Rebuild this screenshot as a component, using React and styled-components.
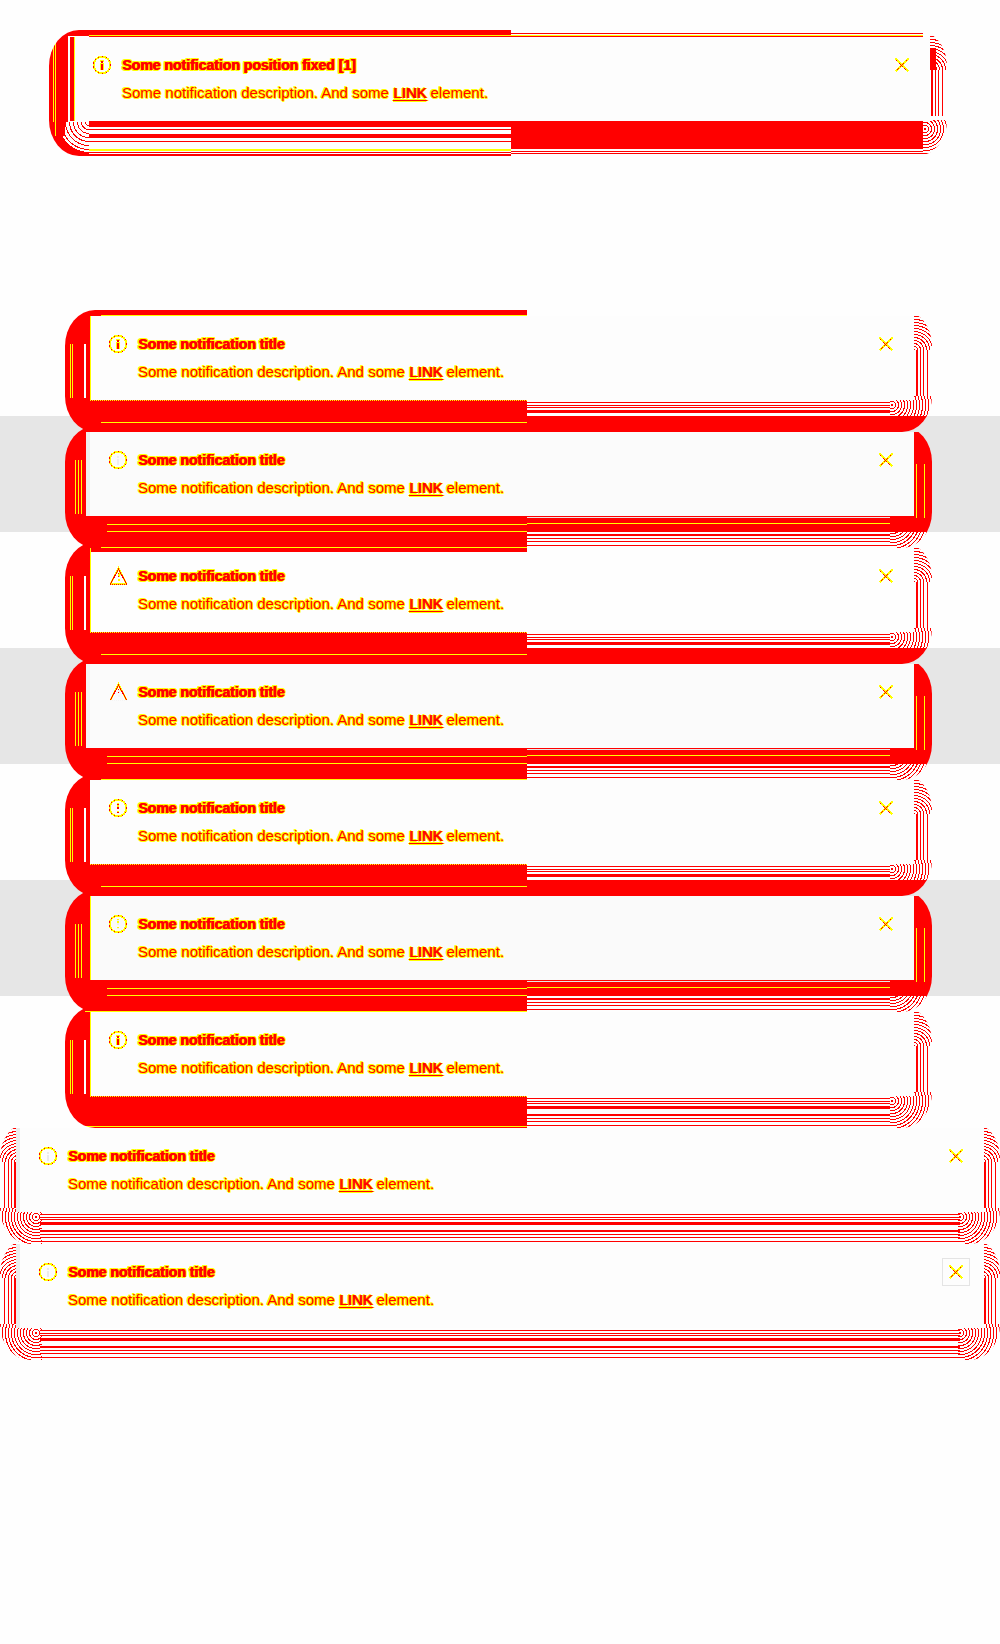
import React from 'react';
import styled, { createGlobalStyle, css } from 'styled-components';

const RED = '#ff0000';
const YELLOW = '#ffff00';

const GlobalStyle = createGlobalStyle`
  *, *::before, *::after { box-sizing: border-box; }
  body {
    margin: 0;
    background: #fefefe;
    font-family: "Liberation Sans", Arial, sans-serif;
  }
`;

/* Builds a hard-edged gradient: [[from, to, colour], ...], transparent between. */
const bands = (direction, list, fill = 'transparent') => {
  const stops = [];
  let last = 0;
  list.forEach(([from, to, colour]) => {
    stops.push(`${fill} ${last}px ${from}px`, `${colour} ${from}px ${to}px`);
    last = to;
  });
  stops.push(`${fill} ${last}px`);
  return `linear-gradient(${direction}, ${stops.join(', ')})`;
};

const red = (from, to) => [from, to, RED];
const yellow = (from, to) => [from, to, YELLOW];

const sideStripes = [red(4, 5), red(8, 9), red(11, 12), red(14, 16)];
const bottomStripes = [red(92, 93), red(95, 96), red(97, 98), red(100, 103), red(108, 110), red(112, 113), red(115, 116), red(119, 120)];

const sideLayers = (side) => `
  ${bands(side === 'right' ? 'to left' : 'to right', sideStripes)} ${side} 0 top 40px / 18px 46px no-repeat`;

const rings = 'repeating-radial-gradient(circle at 2px 9px, #ff0000 0 1px, transparent 1px 3px)';
const ringsFlipped = 'repeating-radial-gradient(circle at 36px 9px, #ff0000 0 1px, transparent 1px 3px)';
const topRings = 'repeating-radial-gradient(circle at 0 36px, #ff0000 0 1px, transparent 1px 3px)';
const topRingsFlipped = 'repeating-radial-gradient(circle at 18px 36px, #ff0000 0 1px, transparent 1px 3px)';

const rightCorners = `
  ${topRings} right 0 top 4px / 18px 36px no-repeat,
  ${rings} right 0 top 86px / 42px 36px no-repeat`;

const leftCorners = `
  ${topRingsFlipped} left 0 top 4px / 18px 36px no-repeat,
  ${ringsFlipped} left 0 top 86px / 42px 36px no-repeat`;

const stripedBottom = `${bands('to bottom', bottomStripes)} left 462px top 0 / calc(100% - 504px) 122px no-repeat`;

const halos = {
  fixed: css`
    inset: -7px -17px -35px -21px;
    background:
      ${bands('to bottom', [yellow(5, 6), red(6, 7), yellow(90, 91), red(91, 97), red(99, 100), red(104, 108), red(111, 112), yellow(119, 121), red(122, 123), red(124, 126)])} 40px 0 / 422px 100% no-repeat,
      linear-gradient(${RED}, ${RED}) 0 0 / 462px 6px no-repeat,
      ${bands('to right', [red(0, 4), yellow(4, 5), red(5, 6), yellow(6, 7), red(7, 19)])} 0 0 / 40px 92px no-repeat,
      ${bands('to right', [red(0, 4), yellow(6, 7), red(8, 16)])} 0 92px / 22px 14px no-repeat,
      repeating-radial-gradient(circle at 40px 0, transparent 0 3px, ${RED} 3px 4px) 0 92px / 40px 34px no-repeat,
      radial-gradient(circle at 40px 0, transparent 30px, ${RED} 30px) 0 92px / 40px 34px no-repeat,
      ${bands('to bottom', [red(3, 4), yellow(5, 6), red(6, 7), yellow(90, 91), red(91, 119), red(121, 122), red(123, 124)])} 462px 0 / calc(100% - 486px) 100% no-repeat,
      ${bands('to left', sideStripes)} right 0 top 40px / 17px 46px no-repeat,
      ${topRings} right 0 top 4px / 17px 36px no-repeat,
      linear-gradient(${RED}, ${RED}) right 11px top 18px / 6px 22px no-repeat,
      ${rings} right 0 top 90px / 24px 34px no-repeat;
  `,
  light: css`
    inset: -6px -18px -32px -21px;
    background:
      ${bands('to bottom', [yellow(5, 6), yellow(112, 113)])} 36px 0 / 426px 100% no-repeat,
      ${bands('to right', [yellow(5, 6), yellow(7, 8), [19, 21, '#ffffff']])} 0 34px / 24px 54px no-repeat,
      linear-gradient(${RED}, ${RED}) 0 0 / 462px 100% no-repeat,
      linear-gradient(${RED}, ${RED}) 0 106px / 100% 16px no-repeat,
      ${stripedBottom},
      ${sideLayers('right')},
      ${rightCorners};
  `,
  shaded: css`
    inset: -6px -18px -32px -21px;
    background:
      ${bands('to bottom', [yellow(98, 99), yellow(105, 106)])} 42px 0 / 420px 122px no-repeat,
      ${bands('to right', [yellow(10, 11), yellow(13, 14), yellow(16, 17)])} 0 34px / 24px 54px no-repeat,
      linear-gradient(${RED}, ${RED}) 0 0 / 462px 100% no-repeat,
      ${bands('to bottom', [[91, 92, '#e6e6e6'], yellow(97, 98)])} 462px 0 / calc(100% - 504px) 106px no-repeat,
      ${bands('to left', [yellow(7, 8), yellow(15, 16)])} right 0 top 38px / 18px 54px no-repeat,
      linear-gradient(${RED}, ${RED}) 0 6px / 100% 100px no-repeat,
      ${stripedBottom},
      ${rightCorners};
  `,
  last: css`
    inset: -6px -18px -32px -21px;
    background:
      ${bands('to bottom', [yellow(5, 6), yellow(120, 121)])} 20px 0 / 442px 100% no-repeat,
      ${bands('to right', [yellow(5, 6), yellow(7, 8), [19, 21, '#ffffff']])} 0 34px / 24px 54px no-repeat,
      linear-gradient(${RED}, ${RED}) 0 0 / 462px 100% no-repeat,
      ${stripedBottom},
      ${sideLayers('right')},
      ${rightCorners};
  `,
  wide: css`
    inset: -6px -16px -32px -16px;
    background:
      ${bands('to bottom', bottomStripes)} 40px 0 / calc(100% - 80px) 122px no-repeat,
      ${sideLayers('right')},
      ${sideLayers('left')},
      ${rightCorners},
      ${leftCorners};
  `,
};

const Page = styled.div`
  padding: 37px 0 300px;
  overflow: hidden;
`;

const Fixed = styled.header`
  max-width: 860px;
  margin: 0 auto 179px;
`;

const Band = styled.section`
  padding: 16px;
  background: ${(p) => (p.$shaded ? '#e6e6e6' : 'transparent')};
`;

const Notice = styled.article`
  position: relative;

  &::before {
    content: "";
    position: absolute;
    border-radius: 30px / 36px;
    ${(p) => halos[p.$halo]}
  }
`;

const Narrow = styled.div`
  max-width: 828px;
  margin: 0 auto;
`;

const Surface = styled.div`
  position: relative;
  z-index: 1;
  display: flex;
  gap: 8px;
  padding: 16px 14px 16px 16px;
  border-left: 4px solid ${(p) => p.$accent};
  background: ${(p) => (p.$topEdge ? `linear-gradient(${RED}, ${RED}) 0 0 / 437px 4px no-repeat` : 'none')} ${(p) => p.$fill};
  ${(p) => p.$edge && `box-shadow: inset 1px 0 ${YELLOW};`}
  ${(p) => p.$dotted && css`
    &::after {
      content: "";
      position: absolute;
      left: 0;
      top: 100%;
      width: 437px;
      height: 1px;
      background: repeating-linear-gradient(to right, ${YELLOW} 0 1px, ${RED} 1px 2px);
    }
  `}
`;

const Icon = styled.svg`
  flex: none;
  width: 24px;
  height: 24px;
`;

const Copy = styled.div`
  flex: 1;
  min-width: 0;
  display: flex;
  flex-direction: column;
  gap: 4px;
  color: ${RED};
  line-height: 24px;
`;

const Title = styled.h2`
  margin: 0;
  font-size: 14px;
  font-weight: 700;
  line-height: 24px;
  text-shadow: 1px 0 ${RED}, -1px 0 ${YELLOW}, 2px 0 ${YELLOW}, 0 -1px ${YELLOW}, 0 1px ${YELLOW},
    1px 1px ${YELLOW}, -1px -1px ${YELLOW}, 2px -1px ${YELLOW}, -1px 1px ${YELLOW};
`;

const Description = styled.p`
  margin: 0;
  font-size: 15px;
  text-shadow: -1px 0 ${YELLOW}, 1px 0 ${YELLOW}, 0 -1px ${YELLOW}, 0 1px ${YELLOW},
    1px 1px ${YELLOW}, -1px -1px ${YELLOW};
`;

const Link = styled.a`
  color: ${RED};
  text-decoration: underline;
  text-underline-offset: 2px;
  text-shadow: 1px 0 ${RED}, -1px 0 ${YELLOW}, 2px 0 ${YELLOW}, 0 -1px ${YELLOW}, 0 1px ${YELLOW};
`;

const Close = styled.button`
  flex: none;
  display: grid;
  place-items: center;
  width: 28px;
  height: 28px;
  margin: -2px 0;
  padding: 0;
  border: 1px solid ${(p) => (p.$outlined ? '#e4e4e4' : 'transparent')};
  background: transparent;
`;

const shapes = {
  info: (inner) => (
    <>
      {inner === RED && <path d="M12 7v2M12 10v7" stroke={YELLOW} strokeWidth="4" />}
      <path d="M12 7.500v2M12 11v6" stroke={inner} strokeWidth="2" />
    </>
  ),
  alert: (inner) => (
    <>
      <path d="M12 7v6M12 15v2" stroke={YELLOW} strokeWidth="2" />
      <path d="M12 8v1M12 11v2M12 16v1" stroke={inner} strokeWidth="2" />
    </>
  ),
};

function StatusIcon({ kind, inner }) {
  if (kind === 'warning') {
    return (
      <Icon viewBox="0 0 24 24" fill="none" aria-hidden="true" shapeRendering="crispEdges">
        {inner === RED && <path d="M4 20h17" stroke={YELLOW} strokeWidth="2" />}
        <path d="M4.5 20 12.5 4.5l8 15.500" stroke={YELLOW} strokeWidth="2" />
        <path d="M4.5 20 12.5 5l8 15" stroke={RED} strokeWidth="1" />
        <path d="M4 20.500h17" stroke={inner} strokeWidth="1" strokeDasharray="1 1" />
        <path d="M12.500 9v4M12.500 15v2" stroke={inner === RED ? YELLOW : inner} strokeWidth="2" />
        <path d="M12 9.500h1M12 12.500h1" stroke={RED} strokeWidth="1" />
      </Icon>
    );
  }
  return (
    <Icon viewBox="0 0 24 24" fill="none" aria-hidden="true" shapeRendering="crispEdges">
      <circle cx="12" cy="12" r="8.300" stroke={YELLOW} strokeWidth="2" />
      <circle cx="12" cy="12" r="8.500" stroke={RED} strokeWidth="1" strokeDasharray="1 3" />
      {shapes[kind](inner)}
    </Icon>
  );
}

function CloseGlyph() {
  return (
    <svg width="16" height="16" viewBox="0 0 16 16" fill="none" aria-hidden="true" shapeRendering="crispEdges">
      <path d="M1.500 1.500l13 13M14.500 1.500l-13 13" stroke={YELLOW} strokeWidth="2.600" />
      <path d="M2 3l11 11M13 3 2 14" stroke={RED} strokeWidth="1" strokeDasharray="2 2" />
      <path d="M6 7l3 3M10 6l-4 4" stroke={RED} strokeWidth="1" />
    </svg>
  );
}

function Notification({
  title = 'Some notification title', kind = 'info', halo, accent = RED,
  fill = '#fdfdfd', inner = RED, edge, dotted, topEdge, closable = true, outlined,
}) {
  return (
    <Notice $halo={halo}>
      <Surface $accent={accent} $fill={fill} $edge={edge} $dotted={dotted} $topEdge={topEdge}>
        <StatusIcon kind={kind} inner={inner} />
        <Copy>
          <Title>{title}</Title>
          <Description>
            Some notification description. And some <Link href="#link">LINK</Link> element.
          </Description>
        </Copy>
        {closable && (
          <Close type="button" aria-label="Close" $outlined={outlined}>
            <CloseGlyph />
          </Close>
        )}
      </Surface>
    </Notice>
  );
}

const rows = [
  { halo: 'light', edge: true, dotted: true },
  { halo: 'shaded', accent: '#eeeeee', fill: '#fbfbfb', inner: '#eeeeee' },
  { halo: 'light', kind: 'warning', edge: true, dotted: true, topEdge: true, fill: '#fefefe' },
  { halo: 'shaded', kind: 'warning', accent: '#f5f5f5', fill: '#fbfbfb', inner: '#f5f5f5' },
  { halo: 'light', kind: 'alert', dotted: true },
  { halo: 'shaded', kind: 'alert', edge: true, fill: '#fafafa', inner: '#eeeeee' },
  { halo: 'last', edge: true, dotted: true, closable: false },
  { halo: 'wide', accent: '#ececec', inner: '#ececec' },
  { halo: 'wide', accent: '#ececec', inner: '#ececec', outlined: true },
];

export default function App() {
  return (
    <Page>
      <GlobalStyle />
      <Fixed>
        <Notification title="Some notification position fixed [1]" halo="fixed" edge />
      </Fixed>
      <main>
        {rows.map((row, i) => (
          <Band key={i} $shaded={row.halo === 'shaded'}>
            {row.halo === 'wide' ? <Notification {...row} /> : <Narrow><Notification {...row} /></Narrow>}
          </Band>
        ))}
      </main>
    </Page>
  );
}
